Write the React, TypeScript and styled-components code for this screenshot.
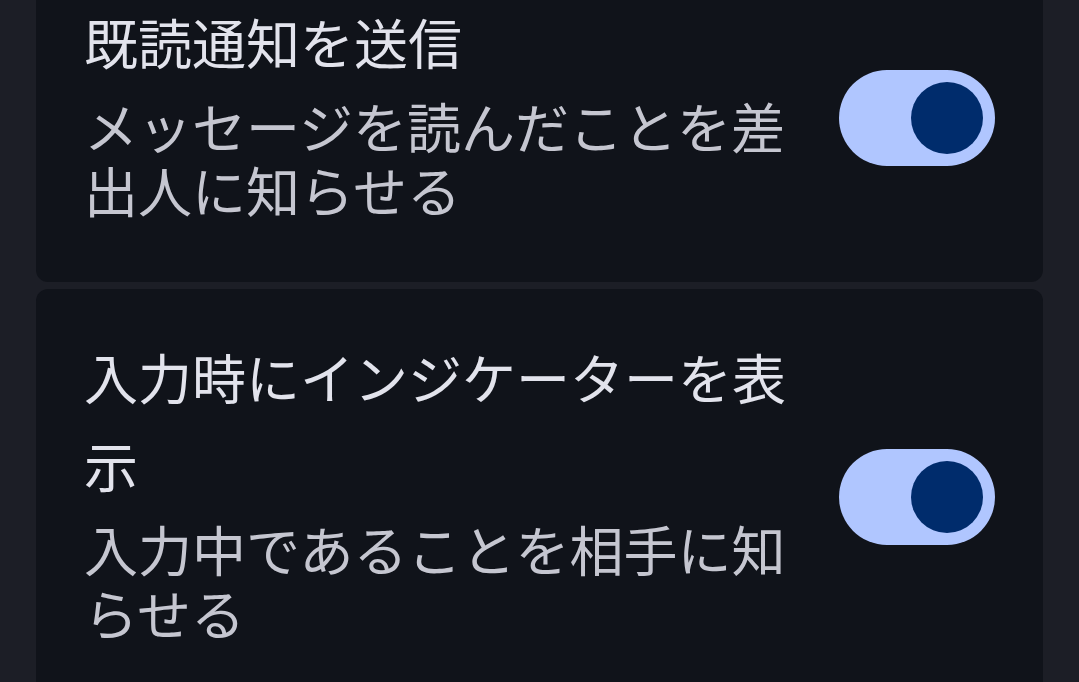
import React, { useState } from 'react'
import styled, { createGlobalStyle } from 'styled-components'

const GlobalStyle = createGlobalStyle`
  html, body {
    margin: 0;
    padding: 0;
    background: #1c1e26;
    overflow: hidden;
  }
  body {
    font-family: "Noto Sans CJK JP", "Noto Sans", sans-serif;
  }
`

const Screen = styled.div`
  display: flex;
  flex-direction: column;
  gap: 7px;
  padding: 0 36px;
  margin-top: -46px;
`

const Card = styled.div`
  display: flex;
  align-items: center;
  gap: 48px;
  padding: 44px 48px 60px;
  background: #10131a;
  border-radius: 12px;
`

const Texts = styled.div`
  flex: 1;
  display: flex;
  flex-direction: column;
  gap: 8px;
  min-width: 0;
`

const Title = styled.div`
  font-size: 54px;
  line-height: 88px;
  color: #e2e3ec;
`

const Description = styled.div`
  font-size: 54px;
  line-height: 64px;
  color: #c5c6d0;
`

const Track = styled.button<{ $on: boolean }>`
  flex: none;
  width: 156px;
  height: 96px;
  margin-top: 16px;
  padding: 0 12px;
  border: none;
  border-radius: 48px;
  background: ${(p) => (p.$on ? '#b0c6ff' : '#43474e')};
  display: flex;
  align-items: center;
  justify-content: ${(p) => (p.$on ? 'flex-end' : 'flex-start')};
  cursor: pointer;
`

const Thumb = styled.span<{ $on: boolean }>`
  width: 72px;
  height: 72px;
  border-radius: 50%;
  background: ${(p) => (p.$on ? '#002c6c' : '#8e9099')};
`

interface RowProps {
  title: string
  description: string
  initial: boolean
}

const SettingRow = (props: RowProps) => {
  const [on, setOn] = useState(props.initial)
  return (
    <Card>
      <Texts>
        <Title>{props.title}</Title>
        <Description>{props.description}</Description>
      </Texts>
      <Track $on={on} onClick={() => setOn(!on)} aria-pressed={on}>
        <Thumb $on={on} />
      </Track>
    </Card>
  )
}

const App = () => (
  <>
    <GlobalStyle />
    <Screen>
      <SettingRow
        title="既読通知を送信"
        description="メッセージを読んだことを差出人に知らせる"
        initial={true}
      />
      <SettingRow
        title="入力時にインジケーターを表示"
        description="入力中であることを相手に知らせる"
        initial={true}
      />
    </Screen>
  </>
)

export default App
